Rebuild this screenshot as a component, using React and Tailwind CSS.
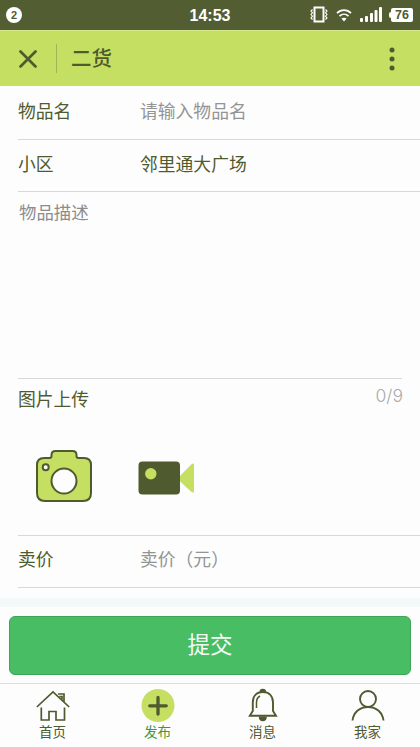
import { useState } from 'react';

function StatusBar() {
  return (
    <div className="relative flex h-[30px] items-center justify-between bg-[#525d32] pl-[6px] pr-[7px] text-white">
      <span className="flex h-4 w-4 items-center justify-center rounded-full bg-white font-['Liberation_Sans',sans-serif] text-[11px] font-bold leading-none text-[#505b30]">
        2
      </span>
      <span className="absolute left-1/2 top-[7px] -translate-x-1/2 font-['Liberation_Sans',sans-serif] text-[16px] font-bold leading-[18px]">
        14:53
      </span>
      <div className="flex items-center">
        <svg width="18" height="18" viewBox="0 0 18 18" fill="none" stroke="currentColor">
          <rect x="4.5" y="1.5" width="9" height="14" strokeWidth="2" />
          <path d="M2.5 3.5l-1.5 1.5 1.5 1.7L1 8.5l1.5 1.7L1 12l1.5 1.5M15.5 3.5L17 5l-1.5 1.7L17 8.5l-1.5 1.7L17 12l-1.5 1.5" strokeWidth="1.1" />
        </svg>
        <svg className="ml-[8px]" width="16" height="14" viewBox="0 0 16 14" fill="none" stroke="currentColor" strokeWidth="1.7">
          <path d="M1 5.2c4-4 10-4 14 0M3.5 8.2c2.6-2.6 6.4-2.6 9 0" />
          <path d="M8 13.4L5.4 10.6c1.6-1.3 3.6-1.3 5.2 0z" fill="currentColor" stroke="none" />
        </svg>
        <svg className="-mt-px ml-[8px]" width="23" height="15" viewBox="0 0 23 15" fill="currentColor">
          <rect x="0" y="11" width="3" height="4" rx="1" />
          <rect x="5" y="9" width="3" height="6" rx="1" />
          <rect x="10" y="6" width="3" height="9" rx="1" />
          <rect x="14.5" y="3" width="3" height="12" rx="1" />
          <rect x="19" y="0" width="3" height="15" rx="1" />
        </svg>
        <span className="ml-[6px] h-[6px] w-[2px] rounded-l-sm bg-white" />
        <span className="flex h-[14px] w-[22px] items-center justify-center rounded-[2px] bg-white font-['Liberation_Sans',sans-serif] text-[12.5px] font-bold leading-none text-[#505b30]">
          76
        </span>
      </div>
    </div>
  );
}

function Header() {
  return (
    <header className="flex h-14 items-center border-t border-[#d4e88b] bg-[#c5df62] pl-[19px] pr-[25px] text-[#4f5a2f]">
      <svg width="18" height="18" viewBox="0 0 18 18" fill="none" stroke="currentColor" strokeWidth="2.7" strokeLinecap="round">
        <path d="M1.5 1.5l15 15M16.5 1.5l-15 15" />
      </svg>
      <span className="ml-[19px] h-[29px] w-px bg-[#a3b656]" />
      <h1 className="ml-[14px] pb-[2px] text-[20.5px] font-medium leading-none">二货</h1>
      <svg className="ml-auto" width="6" height="24" viewBox="0 0 6 24" fill="currentColor">
        <circle cx="3" cy="3" r="2.5" />
        <circle cx="3" cy="12" r="2.5" />
        <circle cx="3" cy="21" r="2.5" />
      </svg>
    </header>
  );
}

function CameraIcon() {
  return (
    <svg width="56" height="52" viewBox="0 0 56 52" stroke="#4f5a2f" strokeWidth="2">
      <path d="M8 8h5.5q2 0 2-2V5q0-4 4-4h17q4 0 4 4v1q0 2 2 2H48q7 0 7 7v28q0 8-8 8H9q-8 0-8-8V15q0-7 7-7z" fill="#c5df62" />
      <circle cx="28" cy="31" r="12.5" fill="#fdfdfd" />
      <circle cx="9.7" cy="17.2" r="3" fill="#fdfdfd" />
    </svg>
  );
}

function VideoIcon() {
  return (
    <svg className="mt-1" width="56" height="34" viewBox="0 0 56 34">
      <path d="M41 16L53 3.8Q56 1 56 4v26q0 3-3 .5L41 19.5z" fill="#c5df62" />
      <rect x="0.5" y="0.5" width="41.5" height="33" rx="4" fill="#4f5a2f" />
      <circle cx="12.8" cy="12.7" r="5.7" fill="#c5df62" />
    </svg>
  );
}

function HomeIcon() {
  return (
    <svg width="34" height="34" viewBox="0 0 34 34" fill="none" stroke="#4f5a2f" strokeWidth="1.7">
      <path d="M.8 19L17 4l16.2 15M22 6h6v8.5M23.5 8.5H26v3M5.3 19.5V32H13v-8.500h7V32h8.500V19.500" />
    </svg>
  );
}

function PublishIcon() {
  return (
    <svg width="34" height="34" viewBox="0 0 34 34">
      <circle cx="17" cy="17.5" r="16.5" fill="#c5df62" />
      <path d="M17 9.5V26M8.750 17.8h16.500" stroke="#4f5a2f" strokeWidth="3.3" strokeLinecap="round" />
    </svg>
  );
}

function BellIcon() {
  return (
    <svg width="34" height="34" viewBox="0 0 34 34" fill="none" stroke="#4f5a2f" strokeWidth="1.9">
      <path d="M6.8 23v-8.500C6.8 8 10.5 4 16.800 4S27 8 27 14.500V23l3 4.800H3.800z" />
      <path d="M10.500 20v-5.500c0-3 1.200-5.300 3.500-6.500" strokeWidth="1.5" />
      <path d="M13.500 4a3.300 3.300 0 0 1 6.600 0zM12.800 28.500h8q0 4.700-4 4.700t-4-4.700z" fill="#4f5a2f" stroke="none" />
    </svg>
  );
}

function UserIcon() {
  return (
    <svg width="34" height="34" viewBox="0 0 34 34" fill="none" stroke="#4f5a2f" strokeWidth="1.9">
      <circle cx="17" cy="11" r="8" />
      <path d="M1.500 32.500C2.500 24 9 19 17 19s14.500 5 15.500 13.500" />
    </svg>
  );
}

const tabs = [
  { key: 'home', label: '首页', Icon: HomeIcon },
  { key: 'publish', label: '发布', Icon: PublishIcon },
  { key: 'message', label: '消息', Icon: BellIcon },
  { key: 'mine', label: '我家', Icon: UserIcon },
];

export default function App() {
  const [tab, setTab] = useState('publish');

  return (
    <div className="flex h-[747px] w-[420px] flex-col overflow-hidden bg-[#fdfdfd] font-['Noto_Sans_CJK_SC',sans-serif] text-[17.8px] leading-6 text-[#4f5a2f]">
      <StatusBar />
      <Header />

      <main className="pl-[18px]">
        <label className="flex h-[54px] items-center border-b border-[#d8d8d8] pb-[5px]">
          <span className="w-[122px]">物品名</span>
          <input className="w-60 outline-none placeholder:text-[#949494]" placeholder="请输入物品名" />
        </label>
        <div className="flex h-[52px] items-center border-b border-[#d8d8d8] pb-1.5">
          <span className="w-[122px]">小区</span>
          <span>邻里通大广场</span>
        </div>
        <textarea
          className="mr-[18px] block h-[187px] w-[384px] resize-none border-b border-[#d8d8d8] pl-px pt-[8px] text-[17.4px] outline-none placeholder:text-[#8c8c8c]"
          placeholder="物品描述"
        />
        <section className="h-[157px] border-b border-[#d8d8d8] pt-[7px]">
          <div className="flex justify-between pr-[17px]">
            <span>图片上传</span>
            <span className="-mt-0.5 font-['Inter','Liberation_Sans',sans-serif] text-[17.5px] font-light text-[#aaaaaa]">0/9</span>
          </div>
          <div className="flex items-center gap-[46px] pl-[18px] pt-10">
            <CameraIcon />
            <VideoIcon />
          </div>
        </section>
        <label className="flex h-[52px] items-center border-b border-[#d5d9dc] pb-[7px]">
          <span className="w-[122px]">卖价</span>
          <input className="w-60 outline-none placeholder:text-[#949494]" placeholder="卖价（元）" />
        </label>
      </main>

      <div className="mt-[10px] h-[9px] shrink-0 bg-[#f3f8f9]" />

      <div className="px-[9px] pt-[9px]">
        <button className="h-[59px] w-full rounded-[6px] border border-[#3fa45a] bg-[#48bd63] pb-[6px] text-[22.5px] text-[#f4fbf5]">
          提交
        </button>
      </div>

      <nav className="mt-2 grid flex-1 grid-cols-4 border-t border-[#dddddd]">
        {tabs.map(({ key, label, Icon }) => (
          <button
            key={key}
            onClick={() => setTab(key)}
            className={`flex flex-col items-center pt-1 text-[13.5px] leading-[18px] ${
              tab === key ? 'text-[#3c9a3c]' : 'text-[#4f5a2f]'
            }`}
          >
            <Icon />
            <span>{label}</span>
          </button>
        ))}
      </nav>
    </div>
  );
}
